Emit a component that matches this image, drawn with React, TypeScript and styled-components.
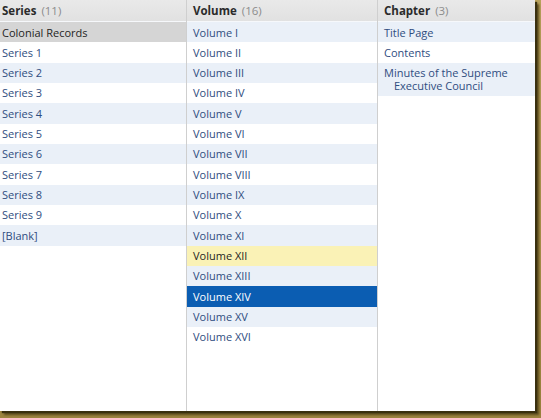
import styled, { createGlobalStyle } from "styled-components";

const GlobalStyle = createGlobalStyle`
    html, body {
        margin: 0;
        padding: 0;
        background: #ffffff;
    }
    body {
        font-family: "Open Sans", "Liberation Sans", sans-serif;
        font-size: 11px;
    }
`;

// the olive frame round the screenshot (a photo-style drop shadow)
const Frame = styled.div`
    width: 541px;
    height: 418px;
    box-sizing: border-box;
    padding: 0 6px 7px 0;
    background: linear-gradient(180deg, #b9a25c 0%, #9c843f 100%);
`;

const Browser = styled.div`
    display: grid;
    grid-template-columns: 186px 191px 1fr;
    height: 100%;
    background: #fff;
    box-shadow: 2px 2px 1px #3a300f, 4px 4px 2px #5c4b1d;
    overflow: hidden;
`;

const Column = styled.section<{ $first?: boolean }>`
    display: flex;
    flex-direction: column;
    min-width: 0;
    border-left: ${(p) => (p.$first ? "none" : "1px solid #cfcfcf")};
`;

const Header = styled.header<{ $inset: number }>`
    display: flex;
    align-items: center;
    gap: 5px;
    height: 21px;
    padding-left: ${(p) => p.$inset}px;
    background: linear-gradient(180deg, #e9e9e9 0%, #e1e1e1 100%);
    border-bottom: 1px solid #f6f8fb;
    flex-shrink: 0;
    font-size: 11.5px;
`;

const Title = styled.span`
    font-weight: 700;
    color: #2b2b2b;
`;

const Count = styled.span`
    color: #8c8c8c;
`;

const List = styled.ul`
    list-style: none;
    margin: 0;
    padding: 0;
`;

type RowState = "normal" | "current" | "hover" | "selected";

const rowBackground = (state: RowState, striped: boolean) => {
    if (state === "current") return "#d5d5d5";
    if (state === "hover") return "#faf2b6";
    if (state === "selected") return "#0b5db2";
    return striped ? "#eaf0f8" : "#ffffff";
};

const rowColor = (state: RowState) => {
    if (state === "current" || state === "hover") return "#1f1f1f";
    if (state === "selected") return "#ffffff";
    return "#2f4d80";
};

const Row = styled.li<{ $state: RowState; $striped: boolean; $inset: number }>`
    padding: 3.5px 4px 3.5px ${(p) => p.$inset + 10}px;
    text-indent: -10px;
    line-height: 13.33px;
    background: ${(p) => rowBackground(p.$state, p.$striped)};
    color: ${(p) => rowColor(p.$state)};
    white-space: normal;
    cursor: default;
`;

interface PaneProps {
    title: string;
    items: string[];
    inset: number;
    first?: boolean;
    states?: Record<number, RowState>;
}

const Pane = ({ title, items, inset, first, states = {} }: PaneProps) => (
    <Column $first={first}>
        <Header $inset={inset}>
            <Title>{title}</Title>
            <Count>({items.length})</Count>
        </Header>
        <List>
            {items.map((item, i) => (
                <Row key={item} $state={states[i] ?? "normal"} $striped={i % 2 === 0} $inset={inset}>
                    {item}
                </Row>
            ))}
        </List>
    </Column>
);

const series = [
    "Colonial Records",
    "Series 1",
    "Series 2",
    "Series 3",
    "Series 4",
    "Series 5",
    "Series 6",
    "Series 7",
    "Series 8",
    "Series 9",
    "[Blank]",
];

const numerals = ["I", "II", "III", "IV", "V", "VI", "VII", "VIII", "IX", "X", "XI", "XII", "XIII", "XIV", "XV", "XVI"];
const volumes = numerals.map((n) => `Volume ${n}`);

const chapters = ["Title Page", "Contents", "Minutes of the Supreme Executive Council"];

export default function App() {
    return (
        <>
            <GlobalStyle />
            <Frame>
                <Browser>
                    <Pane title="Series" items={series} inset={2} first states={{ 0: "current" }} />
                    <Pane title="Volume" items={volumes} inset={6} states={{ 11: "hover", 13: "selected" }} />
                    <Pane title="Chapter" items={chapters} inset={6} />
                </Browser>
            </Frame>
        </>
    );
}
